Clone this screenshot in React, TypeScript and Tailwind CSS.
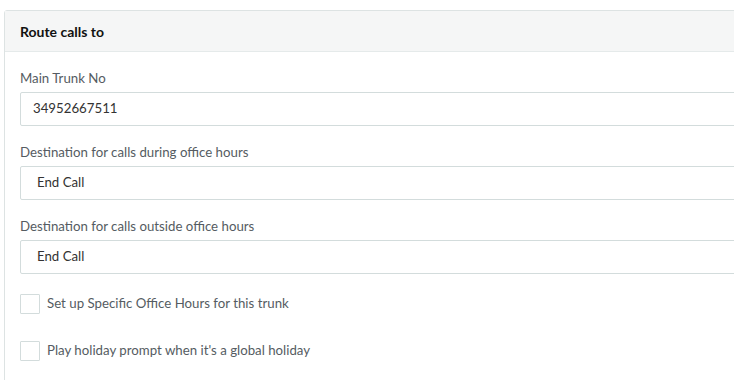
export default function App() {
  return (
    <div className="h-[380px] w-[734px] overflow-hidden bg-white pl-[4px] pt-[10px] font-['Lato',sans-serif]">
      <section className="w-[760px] rounded-[3px] border border-[#dde3e3] bg-white">
        <header className="flex h-[41px] items-center border-b border-[#e5eaea] bg-[#f5f6f6] px-[15px]">
          <h2 className="text-[14px] font-bold text-[#111]">Route calls to</h2>
        </header>
        <div className="flex flex-col px-[15px] pt-[16px] pb-10">
          <Field label="Main Trunk No" value="34952667511" indent="pl-[12px]" />
          <Field label="Destination for calls during office hours" value="End Call" indent="pl-[16px]" />
          <Field label="Destination for calls outside office hours" value="End Call" indent="pl-[16px]" />
          <div className="mt-[4px] flex flex-col gap-[27px]">
            <Check label="Set up Specific Office Hours for this trunk" />
            <Check label="Play holiday prompt when it's a global holiday" />
          </div>
        </div>
      </section>
    </div>
  );
}

function Field({ label, value, indent }: { label: string; value: string; indent: string }) {
  return (
    <div className="mb-[16px]">
      <label className="block text-[13.25px] leading-[20px] text-[#555c62]">{label}</label>
      <div
        className={`mt-[4px] flex h-[34px] items-center rounded-[2px] border border-[#d3dcdc] text-[13.25px] text-[#333] ${indent}`}
      >
        {value}
      </div>
    </div>
  );
}

function Check({ label }: { label: string }) {
  return (
    <label className="flex items-center gap-[7px] text-[13.25px] text-[#555c62]">
      <span className="h-[20px] w-[20px] rounded-[1px] border border-[#d3dcdc] bg-white" />
      {label}
    </label>
  );
}
